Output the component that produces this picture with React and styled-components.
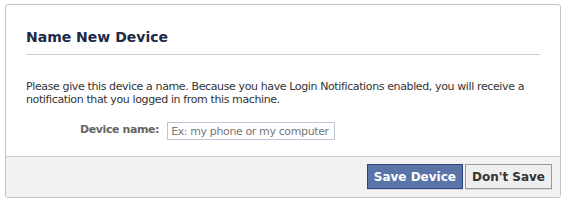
import React from 'react';
import styled, { createGlobalStyle } from 'styled-components';

const colors = {
  navy: '#1c2a47',
  border: '#c4c4c4',
  line: '#cccccc',
  footer: '#f2f2f2',
  blue: '#5b74a8',
  blueBorder: '#29447e',
};

const GlobalStyle = createGlobalStyle`
  body {
    margin: 0;
    background: #ffffff;
    font-family: "DejaVu Sans", "Liberation Sans", sans-serif;
    font-size: 11px;
    color: #333333;
  }
`;

const Page = styled.div`
  padding: 4px 6px 6px 5px;
`;

const Dialog = styled.div`
  width: 556px;
  box-sizing: border-box;
  border: 1px solid ${colors.border};
  border-radius: 3px;
  overflow: hidden;
  background: #ffffff;
`;

const Body = styled.div`
  padding: 24px 20px 16px;
`;

const Title = styled.h2`
  margin: 0;
  padding-bottom: 8px;
  border-bottom: 1px solid ${colors.line};
  font-size: 14px;
  line-height: 17px;
  font-weight: bold;
  color: ${colors.navy};
`;

const Message = styled.p`
  margin: 25px 0 0;
  line-height: 13px;
  letter-spacing: -0.38px;
`;

const FieldRow = styled.div`
  display: flex;
  align-items: flex-start;
  gap: 8px;
  margin-top: 16px;
  padding-left: 54px;
`;

const Label = styled.label`
  font-weight: bold;
  color: #666666;
  letter-spacing: -0.4px;
  padding-top: 1px;
`;

const Input = styled.input`
  width: 168px;
  height: 18px;
  box-sizing: border-box;
  border: 1px solid #bdc7d8;
  padding: 0 3px;
  font-family: inherit;
  font-size: 11px;
  letter-spacing: -0.38px;
  outline: none;

  &::placeholder {
    color: #777777;
  }
`;

const Footer = styled.div`
  display: flex;
  justify-content: flex-end;
  gap: 2px;
  padding: 7px 8px 8px;
  border-top: 1px solid ${colors.line};
  background: ${colors.footer};
`;

const Button = styled.button`
  height: 25px;
  padding: 0 6px;
  box-sizing: border-box;
  font-family: inherit;
  font-size: 12px;
  font-weight: bold;
  cursor: pointer;
  border: 1px solid ${p => (p.$primary ? colors.blueBorder : '#999999')};
  background: ${p => (p.$primary ? colors.blue : '#eeeeee')};
  color: ${p => (p.$primary ? '#ffffff' : '#333333')};
  box-shadow: 0 1px 0 rgba(0, 0, 0, 0.1);
`;

export default function App() {
  return (
    <>
      <GlobalStyle />
      <Page>
        <Dialog>
          <Body>
            <Title>Name New Device</Title>
            <Message>
              Please give this device a name. Because you have Login Notifications enabled, you
              will receive a notification that you logged in from this machine.
            </Message>
            <FieldRow>
              <Label htmlFor="device-name">Device name:</Label>
              <Input id="device-name" type="text" placeholder="Ex: my phone or my computer" />
            </FieldRow>
          </Body>
          <Footer>
            <Button $primary>Save Device</Button>
            <Button>Don't Save</Button>
          </Footer>
        </Dialog>
      </Page>
    </>
  );
}
